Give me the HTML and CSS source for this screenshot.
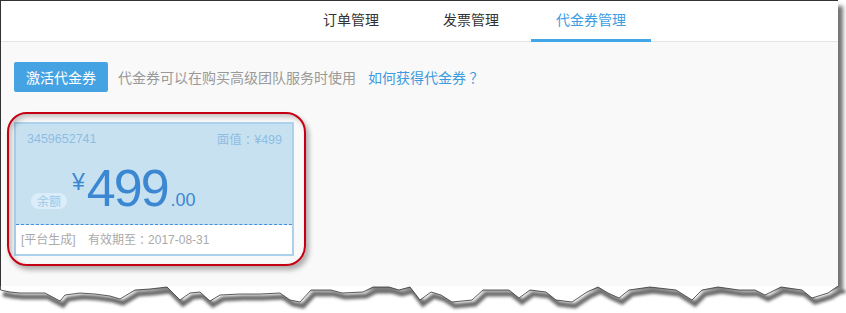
FILE: index.html
```html
<!DOCTYPE html>
<html lang="zh-CN">
<head>
  <meta charset="UTF-8">
  <title>代金券管理</title>
  <link rel="stylesheet" href="styles.css">
</head>
<body>
  <div class="sheet">
    <div class="tabs-bar">
      <a class="tab">订单管理</a>
      <a class="tab">发票管理</a>
      <a class="tab active">代金券管理</a>
    </div>

    <div class="main">
      <div class="toolbar">
        <button class="btn-activate">激活代金券</button>
        <span class="tip">代金券可以在购买高级团队服务时使用</span>
        <a class="help-link">如何获得代金券<span class="punct">？</span></a>
      </div>

      <div class="voucher">
        <div class="voucher-top">
          <div class="voucher-head">
            <span>3459652741</span>
            <span>面值<span class="punct">：</span>¥499</span>
          </div>
          <div class="voucher-amount">
            <span class="tag">余额</span><span class="cur">¥</span><span class="int">499</span><span class="dec">.00</span>
          </div>
        </div>
        <div class="voucher-foot">
          <span>[平台生成]</span>
          <span class="expire">有效期至<span class="punct">：</span>2017-08-31</span>
        </div>
        <!-- 截图标注的红框 -->
        <div class="highlight-ring"></div>
      </div>
    </div>
  </div>

  <!-- 撕纸边缘 -->
  <svg class="torn-edge" width="846" height="27" viewBox="0 0 846 27">
    <defs>
      <filter id="soft" x="-5%" y="-50%" width="110%" height="200%">
        <feGaussianBlur stdDeviation="1.8"/>
      </filter>
    </defs>
    <polyline class="torn-shadow" filter="url(#soft)" transform="translate(3,4)"
      points="0,4 10,6 20,7 45,7 60,15 65,9 80,7 95,8 110,10 120,13 135,4 150,3 167,1 180,14 190,7 200,6 210,15 220,9 240,8 260,8 280,7 290,14 300,16 311,4 331,4 342,7 363,6 373,1 389,1 399,4 410,1 420,14 431,6 441,9 452,16 472,14 483,4 509,4 519,12 530,4 546,6 556,14 572,16 587,6 598,1 608,7 619,12 629,4 650,1 676,4 692,14 702,4 718,1 739,4 755,4 765,9 781,1 802,4 812,12 828,7 838,1 840,1 840,0"/>
    <polygon class="torn-paper"
      points="0,0 0,4 10,6 20,7 45,7 60,15 65,9 80,7 95,8 110,10 120,13 135,4 150,3 167,1 180,14 190,7 200,6 210,15 220,9 240,8 260,8 280,7 290,14 300,16 311,4 331,4 342,7 363,6 373,1 389,1 399,4 410,1 420,14 431,6 441,9 452,16 472,14 483,4 509,4 519,12 530,4 546,6 556,14 572,16 587,6 598,1 608,7 619,12 629,4 650,1 676,4 692,14 702,4 718,1 739,4 755,4 765,9 781,1 802,4 812,12 828,7 838,0"/>
    <polyline class="torn-line"
      points="0.5,0 0.5,4 10,6 20,7 45,7 60,15 65,9 80,7 95,8 110,10 120,13 135,4 150,3 167,1 180,14 190,7 200,6 210,15 220,9 240,8 260,8 280,7 290,14 300,16 311,4 331,4 342,7 363,6 373,1 389,1 399,4 410,1 420,14 431,6 441,9 452,16 472,14 483,4 509,4 519,12 530,4 546,6 556,14 572,16 587,6 598,1 608,7 619,12 629,4 650,1 676,4 692,14 702,4 718,1 739,4 755,4 765,9 781,1 802,4 812,12 828,7 838,0"/>
  </svg>
</body>
</html>
```

FILE: styles.css
```css
body { margin: 0; background: #fff; font-family: "Liberation Sans", "Noto Sans CJK SC", sans-serif; font-size: 14px; color: #333; }

.sheet { width: 837px; height: 285px; border-top: 1px solid #333; border-left: 1px solid #333; background: #f9f9f9; box-shadow: 6px 5px 4px -1px rgba(0, 0, 0, .55); }

/* 居中的全角标点 */
.punct { display: inline-block; width: 1em; text-align: center; font-family: "Noto Sans CJK SC", sans-serif; font-feature-settings: "halt"; }

.tabs-bar { display: flex; height: 40px; padding-left: 290px; background: #fff; border-bottom: 1px solid #e4e4e4; }
.tab { width: 120px; height: 38px; line-height: 38px; margin-bottom: -1px; text-align: center; border-bottom: 3px solid transparent; color: #333; cursor: pointer; }
.tab.active { color: #3c9de2; border-bottom-color: #42a5e6; }

.main { padding: 20px 0 0 13px; }

.toolbar { display: flex; align-items: center; height: 30px; }
.btn-activate { height: 30px; padding: 0 12px; background: #45a3e3; color: #fff; border: none; border-radius: 2px; font-family: inherit; font-size: 14px; cursor: pointer; }
.tip { margin-left: 10px; color: #999; }
.help-link { margin-left: 12px; color: #3d9be0; cursor: pointer; }

.voucher { position: relative; width: 280px; height: 134px; margin-top: 30px; box-sizing: border-box; border: 2px solid #abd1ec; background: #fff; }
.voucher-top { height: 101px; box-sizing: border-box; padding: 7px 10px 0 11px; background: #c8e1f1; border-bottom: 1px dashed #3c8fe2; }
.voucher-head { display: flex; justify-content: space-between; height: 16px; line-height: 16px; font-size: 12.5px; color: #8ebde2; }
.voucher-amount { margin: 15px 0 0 4px; height: 52px; line-height: 52px; font-family: "Liberation Sans", sans-serif; color: #3c87d2; }
.tag { display: inline-block; width: 36px; height: 16px; line-height: 16px; margin-right: 5px; border-radius: 8px; background: #dbedf9; color: #9cc9ea; font-family: "Noto Sans CJK SC", sans-serif; font-size: 12px; text-align: center; }
.cur { font-size: 23px; line-height: 1; vertical-align: 16px; margin-right: 2px; }
.int { font-size: 52px; line-height: 1; letter-spacing: -2px; }
.dec { font-size: 18px; line-height: 1; margin-left: 3px; }

.voucher-foot { height: 28px; line-height: 28px; padding-left: 5px; font-size: 12px; color: #aaa; }
.expire { margin-left: 9px; }

.highlight-ring { position: absolute; left: -9px; top: -12px; width: 295px; height: 150px; border: 2px solid #c40012; border-radius: 20px; box-shadow: 3px 4px 5px rgba(0, 0, 0, .3), inset 3px 3px 5px rgba(0, 0, 0, .22); pointer-events: none; }

.torn-edge { display: block; }
.torn-shadow { fill: none; stroke: #6a6a6a; stroke-width: 5; }
.torn-paper { fill: #fff; }
.torn-line { fill: none; stroke: #333; stroke-width: .8; }
```
